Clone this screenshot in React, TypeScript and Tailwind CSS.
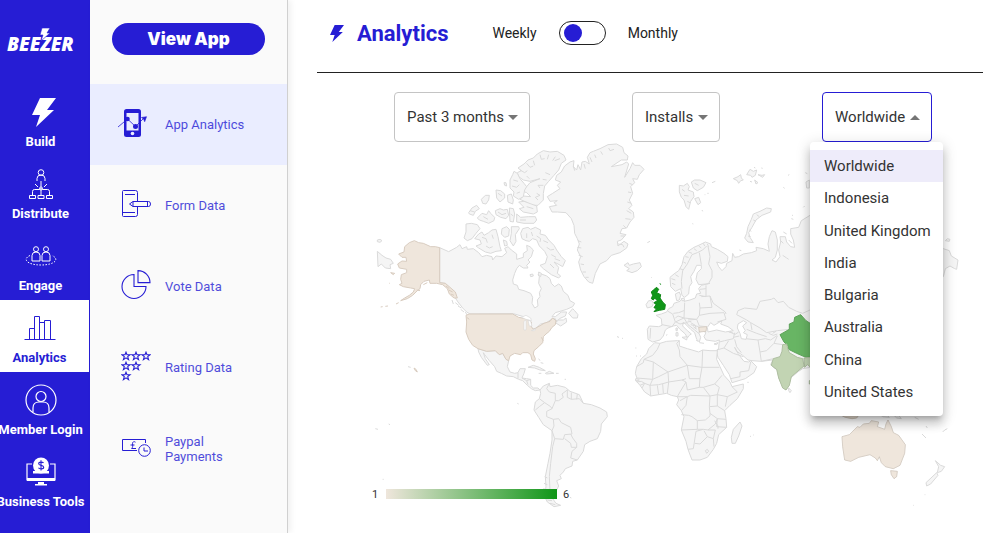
import { useState } from "react";
import type { ReactNode } from "react";
import clsx from "clsx";

const BOLT = "M8 0h16l-9 12h7L4 29l4-12H0z";

function BuildIcon() {
  return (
    <svg width="30" height="29" viewBox="-6 0 30 29" fill="currentColor">
      <path d={BOLT} />
    </svg>
  );
}

function DistributeIcon() {
  return (
    <svg width="24" height="30" viewBox="0 0 24 30" fill="none" stroke="currentColor">
      <circle cx="12" cy="3.500" r="2.800" />
      <path d="M8 12V9.500a4 3.500 0 0 1 8 0V12M12 12v6M6 15l3 3M18 15l-3 3M3.500 26v-3.500q0-2 2-2H10l2-1 2 1h4.500q2 0 2 2V26M12 21v5" />
      <path d="M.5 26.500h6v3h-6zM9 26.500h6v3H9zM17.500 26.500h6v3h-6z" />
      <circle cx="12" cy="19.500" r="1.500" />
    </svg>
  );
}

function EngageIcon() {
  return (
    <svg width="32" height="20" viewBox="0 0 32 20" fill="none" stroke="currentColor">
      <circle cx="11" cy="3.200" r="2.500" />
      <circle cx="21" cy="3.200" r="2.500" />
      <path d="M7 15V9.500a4 3.500 0 0 1 8 0V15zM17 15V9.500a4 3.500 0 0 1 8 0V15z" />
      <path d="M5 9.500C-3 13 2 19 16 19s19-6 11-9.500" strokeDasharray="1.500 1.500" />
    </svg>
  );
}

function BarsIcon() {
  return (
    <svg width="32" height="26" viewBox="0 0 32 26" fill="none" stroke="currentColor">
      <path d="M.5 24.500h31M5.500 24V13.500h5M10.500 24V1.500h5V24M15.500 7.500h5M20.500 24V5.500h6V24" />
    </svg>
  );
}

function MemberIcon() {
  return (
    <svg width="32" height="32" viewBox="0 0 32 32" fill="none" stroke="currentColor" strokeWidth="1.200">
      <circle cx="16" cy="16" r="15" />
      <circle cx="16" cy="12.500" r="5" />
      <path d="M8 28v-4q0-6 6-6h4q6 0 6 6v4" />
    </svg>
  );
}

function ToolsIcon() {
  return (
    <svg width="30" height="30" viewBox="0 0 30 30" fill="none" stroke="currentColor">
      <path d="M6 7H1v16h28V7h-5" strokeWidth="1.200" />
      <path d="M1 21h28v3H1zM12 25h6v2h3v1.500H9V27h3z" fill="currentColor" stroke="none" />
      <circle cx="15" cy="8.500" r="8" fill="currentColor" stroke="none" />
      <path d="M7 14h16v2.500H7z" fill="currentColor" stroke="none" />
      <path d="M17.500 6c-.5-1-4.800-1.600-4.800.7 0 2.300 5 1.100 5 3.500 0 2.300-4.500 2-5.200.5M15 3.300v10.200" stroke="#261dd4" strokeWidth="1.100" />
    </svg>
  );
}

function PhoneTrendIcon() {
  return (
    <svg className="overflow-visible" width="30" height="30" viewBox="3 0 30 30" fill="none" stroke="currentColor">
      <rect x="6" y="1" width="17" height="28" rx="2.500" fill="currentColor" stroke="none" />
      <path d="M8.500 5h12v17.500h-12z" fill="#eaedff" stroke="none" />
      <circle cx="14.500" cy="25.500" r="1.800" fill="#eaedff" stroke="none" />
      <path d="M0 19 9.500 11l8 7.500 8-8" strokeWidth=".8" />
      <circle cx="9.500" cy="11" r="2.300" fill="currentColor" stroke="none" />
      <circle cx="17.500" cy="18.500" r="2.500" fill="currentColor" stroke="none" />
      <path d="m23.500 9.500 5-.8-1.800 5-1-2.500z" fill="currentColor" strokeWidth=".6" />
    </svg>
  );
}

function FormIcon() {
  return (
    <svg width="30" height="30" viewBox="0 0 30 30" fill="none" stroke="currentColor">
      <path d="M16.500 12V3.500q0-2-2-2h-12q-1 0-1 1v24q0 1 1 1h12q2 0 2-2V18M4 5.500h10M1.500 23.500H14" />
      <path d="M12 12.500h15.500q2 0 2 2.500t-2 2.500H12L8.500 15zM26.500 12.500v5M12 12.500v5" />
    </svg>
  );
}

function PieIcon() {
  return (
    <svg width="30" height="30" viewBox="0 0 30 30" fill="none" stroke="currentColor" strokeWidth="1.100">
      <path d="M13 4.500a12 12 0 1 0 12 12H13z" />
      <path d="M17 .6v12h12A12 12 0 0 0 17 .6z" />
    </svg>
  );
}

const stars = [[0, 0], [10, 0], [20, 0], [0, 10], [10, 10], [0, 20]];

function StarsIcon() {
  return (
    <svg width="30" height="30" viewBox="0 0 30 30" fill="none" stroke="currentColor" strokeWidth="1.100">
      {stars.map(([x, y]) => (
        <path
          key={`${x}-${y}`}
          transform={`translate(${x} ${y})`}
          d="m5 1.200 1 2.600h3L6.700 5.600l.9 3L5 6.900 2.400 8.600l.9-3L1 3.800h3z"
        />
      ))}
    </svg>
  );
}

function PaymentIcon() {
  return (
    <svg width="30" height="20" viewBox="0 0 30 20" fill="none" stroke="currentColor">
      <path d="M16 13.500H1.500v-11h23V6M14.500 5.200c-1.500-1.200-3.200-.2-3 1.500.2 2 .6 3.300-.9 4.800h4.400M9.500 8h4" />
      <circle cx="23.500" cy="13.500" r="5.800" />
      <path d="M23 10.500v3.500h4" />
    </svg>
  );
}

interface NavItem {
  label: string;
  icon: ReactNode;
  active?: boolean;
}

const mainNav: NavItem[] = [
  { label: "Build", icon: <BuildIcon /> },
  { label: "Distribute", icon: <DistributeIcon /> },
  { label: "Engage", icon: <EngageIcon /> },
  { label: "Analytics", icon: <BarsIcon />, active: true },
  { label: "Member Login", icon: <MemberIcon /> },
  { label: "Business Tools", icon: <ToolsIcon /> },
];

const subNav: NavItem[] = [
  { label: "App Analytics", icon: <PhoneTrendIcon />, active: true },
  { label: "Form Data", icon: <FormIcon /> },
  { label: "Vote Data", icon: <PieIcon /> },
  { label: "Rating Data", icon: <StarsIcon /> },
  { label: "Paypal Payments", icon: <PaymentIcon /> },
];

const regions = [
  "Worldwide",
  "Indonesia",
  "United Kingdom",
  "India",
  "Bulgaria",
  "Australia",
  "China",
  "United States",
];

// Land shapes are grouped by the part of the world they belong to
const americas = [
  // Greenland
  "M532 170L548 160 570 146 562 136 572 126 556 120 560 106 574 96 584 78 600 66 612 62 610 80 620 90 624 74 632 90 636 66 646 64 658 72 652 52 660 38 670 34 690 26 714 14 740 12 758 22 762 38 774 48 772 60 754 60 724 80 756 74 770 66 776 72 764 112 780 86 788 68 794 76 810 76 822 88 808 104 802 118 788 116 794 128 782 140 788 160 778 180 786 196 776 206 790 216 792 232 780 246 770 264 756 266 750 280 768 284 754 300 742 304 744 318 762 304 774 312 770 324 750 338 724 346 710 362 690 372 676 400 668 430 656 426 642 410 632 390 626 366 632 350 622 330 628 312 622 296 614 280 612 256 604 236 588 218 562 216 546 216 538 200 560 196 552 188 562 182 540 184Z",
  // Canada
  "M209 323L236 335 260 322 270 314 276 326 290 320 292 328 310 326 326 338 336 350 350 346 366 350 368 360 378 348 396 350 410 338 404 325 414 320 424 330 440 342 440 358 460 352 460 340 472 332 470 316 480 320 490 330 484 350 474 360 480 366 470 376 474 384 460 384 448 376 440 386 434 400 428 420 430 432 442 436 446 448 462 452 482 460 488 472 486 490 494 504 504 498 502 480 510 470 508 458 514 446 506 430 508 410 504 404 514 402 530 408 540 416 544 430 554 440 566 432 574 438 580 454 594 466 600 482 614 490 608 500 590 508 570 514 556 518 546 530 556 530 574 516 590 516 586 528 568 536 560 548 556 536 546 536 530 548 512 552 496 566 484 566 484 546 468 532 430 521 300 522 290 516 278 504 264 486 256 474 252 460 226 430 209 428Z",
  "M596 520L608 506 614 512 624 524 622 534 608 534Z",
  "M556 548L566 540 580 540 588 534 590 546 572 558Z",
  // Arctic islands
  "M458 266L474 262 482 268 496 262 512 270 510 282 526 286 536 300 552 316 560 330 574 350 586 362 578 380 564 372 552 366 566 382 562 400 572 408 566 414 544 404 520 386 510 376 526 370 532 350 524 334 508 318 500 300 488 296 478 304 468 302 456 296 452 280Z",
  "M326 282L336 276 342 286 356 278 366 270 378 268 384 290 390 320 394 332 378 334 362 340 346 336 326 324 318 318 334 312 330 300 314 296Z",
  "M288 252L304 250 322 254 330 266 318 280 306 296 292 302 282 294 288 276Z",
  "M396 266L410 260 418 268 416 288 404 292 394 282Z",
  "M400 300L410 304 412 316 404 318Z",
  "M424 260L446 260 448 266 436 284 438 304 430 318 420 302 424 280Z",
  "M440 222L452 232 476 230 496 230 500 240 492 250 462 250 440 246Z",
  "M444 84L462 72 474 60 490 54 502 42 520 32 540 36 562 34 582 46 588 60 574 70 566 90 552 106 536 124 524 138 520 160 520 180 504 196 486 196 468 186 450 178 460 168 482 170 470 158 448 150 470 140 480 128 500 120 510 116 480 124 460 120 446 110 442 98 454 92Z",
  "M432 94L428 104 420 120 420 144 432 156 430 168 446 178 460 170 464 150 470 140 462 130 450 116 442 100Z",
  "M446 186L462 184 500 198 502 216 490 222 460 216 448 206 462 202Z",
  "M322 234L336 220 350 224 356 212 362 220 374 232 372 242 356 250 340 244 328 240Z",
  "M296 218L306 204 320 196 328 206 316 214 310 226 298 222Z",
  "M334 178L346 166 358 166 356 180 348 192 338 190Z",
  "M378 150L392 152 404 162 404 174 390 186 380 174Z",
  "M412 166L424 162 430 180 428 192 414 186Z",
  "M376 212L390 206 400 210 412 208 416 226 408 236 392 232 378 224Z",
  "M418 204L430 206 434 222 430 246 420 244Z",
  "M402 128h6l2 10-6-2zM480 404l8-2 2 6-8 2zM506 396l8 4-2 10-6-4z",
  // Chukotka
  "M22 334L36 346 48 354 62 358 70 370 60 374 62 386 46 384 34 372 24 380ZM22 300l8-2 6 4-6 5-8-2z",
  // Mexico and Central America
  "M324 626L350 634 376 632 388 644 398 640 408 658 416 662 412 680 420 696 434 700 444 698 450 686 466 686 462 700 456 714 470 716 482 718 482 736 490 744 504 744 510 750 496 752 484 746 472 736 458 722 446 718 430 710 410 708 394 700 380 694 374 680 358 662 344 644 340 638 346 656 358 674 352 676 334 652 326 636Z",
  "M474 682L490 676 508 682 526 692 510 690 494 684ZM526 700L538 694 552 700 530 702ZM506 700l8 0M558 700l8 0M506 656l4 6M512 668l8 2",
  // South America
  "M510 750L520 738 538 730 540 740 562 736 586 742 600 754 628 764 640 790 664 794 690 804 710 816 712 830 694 852 692 874 682 896 660 904 644 914 640 934 622 960 608 964 606 978 586 986 580 996 570 1006 574 1016 560 1022 566 1038 556 1058 548 1076 558 1090 572 1096 552 1100 532 1086 524 1070 528 1040 526 1010 534 970 540 940 546 900 546 872 520 854 506 832 492 810 496 786 508 776 512 760Z",
  "M114 680l8 2M16 866l8 2M56 852l4 2M442 790l4 2M38 1018l3 0M600 1072l4 2M584 718l4 0M742 590l4 2",
];

const americaBorders =
  "M538 730L530 746 538 756 556 760 556 782 566 782 580 772 576 762 592 750M508 776L524 788 542 800 546 806 530 814 530 830 550 838 566 836 574 848 602 862 606 882 584 884 580 898 554 896 546 872 552 858 550 838M602 882L608 894 620 910 620 922 604 922 602 910 584 896M620 922L606 934 602 954 622 960M554 896L548 920 542 970 538 1010 540 1050 548 1076M592 750L592 772 604 778 628 776 640 790M604 758V778M622 762L620 778M496 810L508 800 524 788M546 806L556 782M444 698L444 716M456 714L470 722 482 718M470 722L474 734M546 552L562 540";

// Fjords and small inlets along the northern and southern coasts
const americaInlets =
  "M450 90l14 8 8-6M470 70l10 12 10-4M490 62l4 14M510 44l4 14 10-2M536 44l-4 14M556 50l-8 12M570 56l-16 6M540 104l-14-6M530 120l-12-2M520 136l-16 0 6 8M500 160l10 6-14 6 8 8M470 108l8 8M430 120l14 4M426 138l14 4 8-8M440 160l10-4M470 200l20 6M450 240l18 0M300 212l14 4M340 230l14 8M384 216l12 8 12-4M384 160l12 8M422 222l8 6M470 280l0 14M484 276l4 12M500 288l12 8-2 10M520 302l14 6M530 322l12 8 10-2M544 344l14 8M554 356l16 6M540 372l12 12M336 292l12 4 4 12M366 284l4 12M348 318l10 6 10-4M246 480l4 12M256 488l10 8M264 498l10 6M272 508l10 8M286 516l6 10M614 92l-4-14M642 72l4 14M660 52l6 14M674 44l4 10M692 34l6 10M716 24l4 8 12-4M778 130l10 4M774 156l10 2M772 186l12 4M770 212l14 8M766 236l16 2M760 256l8 8M752 288l12 0M744 312l14 2 4 8M624 302l10 4M622 322l12 2M626 346l12 4M632 372l10 2M638 396l10 0M646 412l10 0M524 1010l8 4M522 1030l10 4M520 1046l12 4M524 1062l14 6M532 1080l14 2M540 1090l16 4";

const unitedStates = [
  "M209 323L196 320 182 320 160 310 146 308 133 302 118 308 104 320 102 336 86 342 96 352 108 352 110 364 96 363 83 372 88 384 110 388 110 398 94 404 92 418 96 430 88 434 100 440 122 444 134 446 130 456 118 466 104 474 92 482 112 476 128 466 142 452 150 446 152 434 162 424 178 420 180 430 200 430 218 434 232 446 238 462 252 474 262 474 256 456 240 442 226 430 209 428Z",
  "M298 522L428 522 446 532 468 536 484 546 484 560 490 568 498 564 522 550 540 544 548 534 558 542 556 554 546 562 538 574 528 582 520 590 518 608 506 620 492 632 490 642 496 656 494 664 486 660 482 644 474 638 458 638 452 644 434 640 420 648 416 662 408 658 398 640 388 644 376 632 350 634 324 626 308 616 296 598 288 576 290 546 288 526Z",
  "M132 684l6 4 4 8-6-4zM78 492l8-4M32 501l6-1M46 499l8-1M62 398l12 2-4 4zM57 429l2 1",
  "M228 438l10 8M236 450l12 6M242 462l10 4M160 434l12-6M140 450l10 2M514 592l6 10M290 532l8 6",
];

const oldWorld = [
  // Eurasia
  "M212 440L210 412 222 402 236 392 246 374 252 350 264 334 282 322 300 314 316 306 332 312 334 320 352 328 372 340 384 350 382 364 364 370 350 366 356 380 366 392 378 380 380 370 396 362 398 340 404 352 416 350 430 342 454 338 470 332 468 322 490 326 508 334 504 312 508 290 516 272 526 276 532 300 532 330 526 352 516 360 528 366 540 350 536 330 542 306 540 290 556 290 560 306 572 320 584 322 580 300 572 282 572 266 596 262 604 242 630 226 700 200 900 270 1030 326 1048 332 1054 348 1074 360 1070 388 1064 386 1050 378 1036 386 1030 410 900 440 760 560 720 640 660 740 632 682 608 686 596 694 572 714 566 738 558 750 548 740 536 712 532 690 522 684 512 674 518 660 484 664 456 662 444 660 428 646 410 634 404 622 414 640 424 654 432 664 446 666 452 662 470 680 462 698 436 716 396 728 388 704 370 676 354 652 350 636 356 624 358 600 346 604 318 600 312 590 318 578 308 572 296 578 302 592 298 606 290 598 284 578 272 568 256 552 250 546 248 558 262 572 274 582 268 586 262 594 256 582 240 568 230 556 220 558 204 564 196 570 190 588 180 600 158 606 144 598 142 568 148 558 176 560 186 556 184 536 168 526 184 522 200 516 206 506 218 500 222 490 234 486 240 484 246 476 252 484 270 480 286 474 290 462 302 460 296 446 304 436 330 430 318 432 296 434 288 418 292 398 304 386 304 376 290 376 282 394 272 410 276 428 268 440 266 462 254 472 246 466 242 446 226 454Z",
  "M226 462L238 456 242 466 238 480 230 482ZM244 476l8-2 2 8-8 0z",
  // Svalbard, Franz Josef Land and Novaya Zemlya
  "M238 136L250 138 262 130 268 140 264 150 280 156 282 170 272 184 266 208 258 200 252 180 244 172 238 156Z",
  "M274 126L284 120 300 120 318 128 310 142 292 152 280 144ZM284 176L296 172 302 188 294 194Z",
  "M336 128l10-4M314 164l2 0M322 160l4 0M306 210l2 4M277 251l3 1M142 308l8-4M153 411l2 2",
  "M400 116l14-6 8-6 2 10 6 6-8 2-6 8-4-8zM440 104L450 88 460 94 470 90 466 106 456 112 452 106ZM474 104L486 106 494 104 488 112ZM464 120l10 8-6 4zM462 82l4 2M484 84l4 1M450 124l6 2M564 106l4-2M550 142l4 3M616 98l6 3M610 202l4-4M576 226l3 0M574 236l6 2",
  "M500 204L514 206 512 216 486 226 468 240 456 262 446 278 450 292 460 308 444 306 434 294 440 280 444 260 454 238 460 222 480 214Z",
  "M618 126l10-6v24l-8 0zM550 276l10 6M418 330l6 2",
  // Iceland, Ireland
  "M72 376L84 368 88 376 100 372 120 368 124 380 112 392 96 398 80 392 88 386Z",
  "M146 482L156 482 160 490 156 500 142 504 138 494Z",
  // Africa
  "M238 602L232 602 200 604 180 610 164 608 146 626 140 642 124 656 110 680 106 700 110 712 106 720 120 736 134 756 152 768 176 764 200 760 214 766 232 770 236 780 230 794 244 812 252 830 244 870 258 904 264 928 276 960 300 960 322 952 340 928 350 910 356 884 380 862 378 836 374 812 390 796 412 776 430 746 430 732 396 740 390 726 372 706 360 680 350 658 352 632 330 632 308 630 296 636 276 630 262 626 238 618Z",
  "M420 846L426 858 416 888 406 910 396 910 394 892 400 868Z",
  "M228 578h6v10h-6zM228 564l4 0v8l-4 0zM246 592l16-2-2 10zM298 608l14 2M342 612l12-4-4 6zM198 586l4-2M288 600l6 4",
  "M566 744L574 752 570 758 566 752Z",
  "M52 590l4 2M66 595l3 0M106 624l3 0M108 648l3 0M120 648l3 0M442 727l4 0M450 888l3 2M460 885l2 0",
  // New Zealand and the Pacific
  "M1006 962L1022 976 1034 980 1024 994 1012 998 1016 980ZM1010 998L1014 1006 992 1032 980 1038 978 1028Z",
  "M838 822l20 0 10 10-20-2zM882 826l14 0 8 10-14-2zM944 832l12 6M966 882l12 12M978 858l4 6M1028 876l6-6 8-4M940 1096l2 0M974 1064l2 0M1036 302l6-6 8 2-2 6z",
];

const oldWorldBorders =
  "M320 318L308 330 292 338 276 344 262 372 248 392 244 424 246 446M298 338L304 374M324 318L330 350 326 372 336 392 336 412 326 430M300 448L318 446M298 466L318 470 318 436M410 524L414 512 434 504 470 508 480 484 514 478 522 474 534 488 550 484 566 502 590 514 608 520 630 510M186 554L216 560 226 546 218 522 204 514M226 546L252 534 254 488M252 534L290 538 298 526 300 504 298 488M290 538L298 558 320 560M298 526L330 520 372 518 378 538 352 546M252 534L264 554 284 570 296 580M264 540L290 538M304 470L330 468 336 502 300 504M330 468L340 490 376 516 378 522M220 520L236 518 252 512M228 546L240 552 262 548M152 564L150 596M272 554L296 560M226 534L234 528 252 534M358 606L374 602 400 596 404 578M350 630L372 624 386 602M372 624L400 640 430 650M404 598L410 620 424 638M436 596L474 600 480 636 484 664M480 636L500 632 522 610 532 588M474 600L496 596 512 600 532 586M440 568L470 580 500 590M452 548L480 564 500 578 532 572 568 568M410 524L440 540 452 548 456 570M484 664L520 656M420 696L446 692 452 666M392 716L420 710 420 696M522 610L548 614M388 572L404 584 416 576M400 592L418 588M180 610L172 628 158 646 132 658 160 666 204 696 262 676 240 650 238 630 230 610 238 602M262 676L306 682 308 630M306 682H358M306 682L300 716 268 716 262 676M132 658L130 668 110 680M160 666L158 718 110 714M204 696L206 726 246 720 258 716M206 726L202 760M246 720L258 726 240 756 232 770M158 718L176 710 204 696M158 718L150 736 176 734 192 730 206 726M150 736L152 768M172 736L176 764M188 732L190 760M120 736L134 730 150 736M110 726L124 724 134 730 126 744M300 716L298 742 262 750 258 726M298 742L310 742 330 768 352 764 358 742 344 732 356 718 366 706M344 732L310 742M352 764L382 770 412 756 396 740M382 770L376 800M330 768L328 800 352 798 374 812M352 798V764M328 800L330 820 352 836 378 838M262 770L258 796 244 812M232 770L262 770 272 766 330 768M240 782L262 770M244 824L266 826 276 830 292 842 292 868 246 870M292 842L316 840 330 828 330 820M292 868L310 868 324 870 346 852 352 836M310 868L288 874 284 900 280 926 264 928M284 910L300 912 322 890 312 872M322 890L340 896 346 870 324 870M340 896L342 920M352 836L350 860 380 862M316 932l6-4 4 6-6 6z";

const oldWorldInlets =
  "M214 416l12 4M216 430l10 4M226 404l10 6M240 386l10 4M250 366l8 4M256 350l10 2M266 336l10 4M282 326l8 6M296 318l8 6M310 310l4 8M322 312l4 8M246 148l8 6M252 166l14 2M262 184l8 4M284 130l12 6M448 270l6 4M444 288l8 2M460 240l8 4M470 224l8 6M540 300l10 10M566 300l10 10M548 346l12 8 6 4M344 842l10 16 0 8M106 722l12 0M108 716l10 2M272 548l14 8 2 10M262 546l12-2M280 560l10 8M506 580l14 6 12-4M518 580l10-6M386 576l14 4";

const lakes =
  "M322 562L332 548 342 556 366 542 362 552 384 560 400 572 376 576 350 570 324 576ZM414 552L430 542 440 548 428 558 436 572 430 578 442 584 438 598 424 596 420 580 412 564Z";

const shaded = [
  {
    name: "United Kingdom",
    color: "#109618",
    d: "M160 450L170 442 176 448 170 458 182 464 180 474 188 486 196 494 194 508 178 511 162 515 170 506 162 503 168 494 162 488 172 482 164 474 160 480 154 476 158 466 154 456ZM180 430l2 4",
  },
  {
    name: "China",
    color: "#68b564",
    d: "M540 584L568 568 568 552 582 546 584 532 602 524 618 542 640 556 640 650 618 652 590 640 566 628 564 618 552 606Z",
  },
  {
    name: "India",
    color: "#c2d4b3",
    d: "M548 614L560 612 564 628 568 638 592 652 608 656 612 678 600 688 574 710 568 736 558 750 548 744 536 714 530 688 514 676 520 656 540 650 546 634ZM612 654L632 652V682L622 674 614 682ZM628 722l4 0v10l-4 0z",
  },
  {
    name: "Bulgaria",
    color: "#efe6dc",
    d: "M296 562L320 560 318 574 298 576Z",
  },
  {
    name: "Australia",
    color: "#efe6dc",
    d: "M726 890L748 884 772 860 780 862 790 852 808 850 814 842 836 846 832 860 854 868 858 852 864 840 874 860 880 878 896 886 906 900 916 914 914 940 900 976 880 986 856 980 844 968 838 950 832 962 826 954 810 944 776 952 752 964 734 960 728 920ZM872 992L892 994 890 1010 882 1016 874 1004Z",
  },
  {
    name: "Indonesia",
    color: "#e6dccf",
    d: "M724 826L776 826 770 834 756 836 736 832Z",
  },
];

function GeoChart() {
  return (
    <svg
      className="block h-auto w-full"
      viewBox="317 142 666 370"
      role="img"
      aria-label="Installs by country"
    >
      <defs>
        <linearGradient id="scale">
          <stop offset="0" stopColor="#efe6dc" />
          <stop offset="1" stopColor="#109618" />
        </linearGradient>
      </defs>
      <g transform="translate(370 140) scale(.33333)" strokeWidth="3" strokeLinejoin="round">
        <g fill="#f5f5f5" stroke="#dadada">
          {americas.map((d) => (
            <path key={d} d={d} />
          ))}
          <path d={americaBorders} fill="none" />
          <path d={americaInlets} fill="none" />
        </g>
        <g fill="#efe6dc" stroke="#d8ccc0">
          {unitedStates.map((d) => (
            <path key={d} d={d} />
          ))}
        </g>
        <path
          d="M454 532l14-6 14 8 2 8-16-4zM462 544l6-4v30l-6 0zM474 540l8 4 4 14-8 0zM484 572l14-6-4 6z"
          fill="#fff"
          stroke="#dadada"
          strokeWidth="2"
        />
      </g>
      <g transform="translate(600 140) scale(.33333)" strokeWidth="3" strokeLinejoin="round">
        <g fill="#f5f5f5" stroke="#dadada">
          {oldWorld.map((d) => (
            <path key={d} d={d} />
          ))}
          <path d={oldWorldBorders} fill="none" />
          <path d={oldWorldInlets} fill="none" />
          <path d={lakes} fill="#fff" />
        </g>
        {shaded.map((country) => (
          <g key={country.name}>
            <path d={country.d} fill={country.color} stroke={country.color} />
            <path d={country.d} fill="none" stroke="#000" strokeOpacity=".1" />
          </g>
        ))}
      </g>
      <rect x="386" y="489" width="171" height="10" fill="url(#scale)" />
      <g fontFamily="Roboto, sans-serif" fontSize="11" fill="#333">
        <text x="372" y="498">1</text>
        <text x="563" y="498">6</text>
      </g>
    </svg>
  );
}

interface FilterProps {
  label: string;
  options: string[];
  width: string;
  open?: boolean;
}

function Filter({ label, options, width, open }: FilterProps) {
  return (
    <div className="relative">
      <select
        aria-label={label}
        className={clsx(
          "block h-[50px] appearance-none rounded border bg-white pl-3 text-[15px] text-[#333] outline-none",
          width,
          open ? "border-[#261dd4]" : "border-[#c4c4c4]"
        )}
      >
        {options.map((option) => (
          <option key={option}>{option}</option>
        ))}
      </select>
      <svg
        className={clsx("pointer-events-none absolute top-[23px] right-3", open && "rotate-180")}
        width="10"
        height="5"
        viewBox="0 0 10 5"
        fill="#757575"
      >
        <path d="M0 0h10L5 5z" />
      </svg>
      {open && (
        <ul
          role="listbox"
          aria-label={label}
          className="absolute top-full -left-3 z-10 flex h-[274px] w-[133px] flex-col rounded bg-white py-2 text-[15px] text-[#333] shadow-[0_5px_5px_-3px_rgba(0,0,0,0.2),0_8px_10px_1px_rgba(0,0,0,0.14),0_3px_14px_2px_rgba(0,0,0,0.12)]"
        >
          {options.map((option, i) => (
            <li
              key={option}
              role="option"
              aria-selected={i === 0}
              className={clsx(
                "flex flex-1 items-center px-3.5 leading-5 whitespace-nowrap",
                i === 0 && "bg-[#eeecfa]"
              )}
            >
              {option}
            </li>
          ))}
        </ul>
      )}
    </div>
  );
}

export default function App() {
  const [monthly, setMonthly] = useState(false);

  return (
    <div className="flex min-h-screen overflow-hidden bg-white font-['Roboto',sans-serif]">
      {/* Main navigation */}
      <nav className="w-[90px] shrink-0 bg-[#261dd4] text-white">
        <a href="#" className="block h-[84px] pt-7 pl-1.5" aria-label="Beezer home">
          <svg width="70" height="26" viewBox="0 0 70 26" fill="currentColor">
            <text x="1" y="23" fontFamily="'Open Sans', sans-serif" fontSize="19" fontWeight="800" fontStyle="italic">
              BEEZER
            </text>
            <path d="M36 0h8l-3 5h3l-9 8 2-6h-3z" stroke="#261dd4" strokeWidth=".6" />
          </svg>
        </a>
        {mainNav.map((item) => (
          <a
            key={item.label}
            href="#"
            className={clsx(
              "flex h-[72px] w-[89px] flex-col items-center pt-3",
              item.active ? "bg-white pr-2.5 text-[#261dd4]" : "pr-2"
            )}
          >
            <span className="flex h-8 items-center">{item.icon}</span>
            <span className="mt-1 text-[13px] leading-5 font-bold whitespace-nowrap">{item.label}</span>
          </a>
        ))}
      </nav>

      {/* Section navigation */}
      <aside className="w-[198px] shrink-0 border-r border-[#d0d0d0] bg-[#fafafa] shadow-[3px_0_6px_rgba(0,0,0,0.06)]">
        <div className="h-[84px] px-[22px] pt-[23px]">
          <button className="h-8 w-full rounded-full bg-[#261dd4] font-['Inter',sans-serif] text-[17px] leading-8 font-black text-white">
            View App
          </button>
        </div>
        {subNav.map((item) => (
          <a
            key={item.label}
            href="#"
            className={clsx(
              "flex h-[81px] items-center gap-[14px] pr-8 pl-[31px] text-[13px] leading-[15px] text-[#261dd4]",
              item.active && "bg-[#eaedff]"
            )}
          >
            <span className="mb-1 shrink-0">{item.icon}</span>
            <span className="opacity-80">{item.label}</span>
          </a>
        ))}
      </aside>

      {/* Content */}
      <main className="min-w-0 flex-1 pl-[29px]">
        <header className="flex h-[73px] items-center border-b border-[#222] pb-1.5 pl-[13px]">
          <svg className="text-[#261dd4]" width="14" height="17" viewBox="0 0 24 29" fill="currentColor">
            <path d={BOLT} />
          </svg>
          <h1 className="ml-[13px] text-[22px] font-bold text-[#261dd4]">Analytics</h1>
          <label className="ml-11 flex items-center text-sm text-[#222]">
            Weekly
            <input
              type="checkbox"
              checked={monthly}
              onChange={(e) => setMonthly(e.target.checked)}
              className="mx-[22px] h-6 w-[47px] appearance-none rounded-full border border-[#222] px-1 py-0.5 before:block before:size-[18px] before:rounded-full before:bg-[#261dd4] checked:before:ml-auto"
            />
            Monthly
          </label>
        </header>
        <div className="flex justify-between pt-[19px] pr-[51px] pl-[77px]">
          <Filter label="Period" options={["Past 3 months"]} width="w-[136px]" />
          <Filter label="Metric" options={["Installs"]} width="w-[88px]" />
          <Filter label="Region" options={regions} width="w-[110px]" open />
        </div>
        <GeoChart />
      </main>
    </div>
  );
}
